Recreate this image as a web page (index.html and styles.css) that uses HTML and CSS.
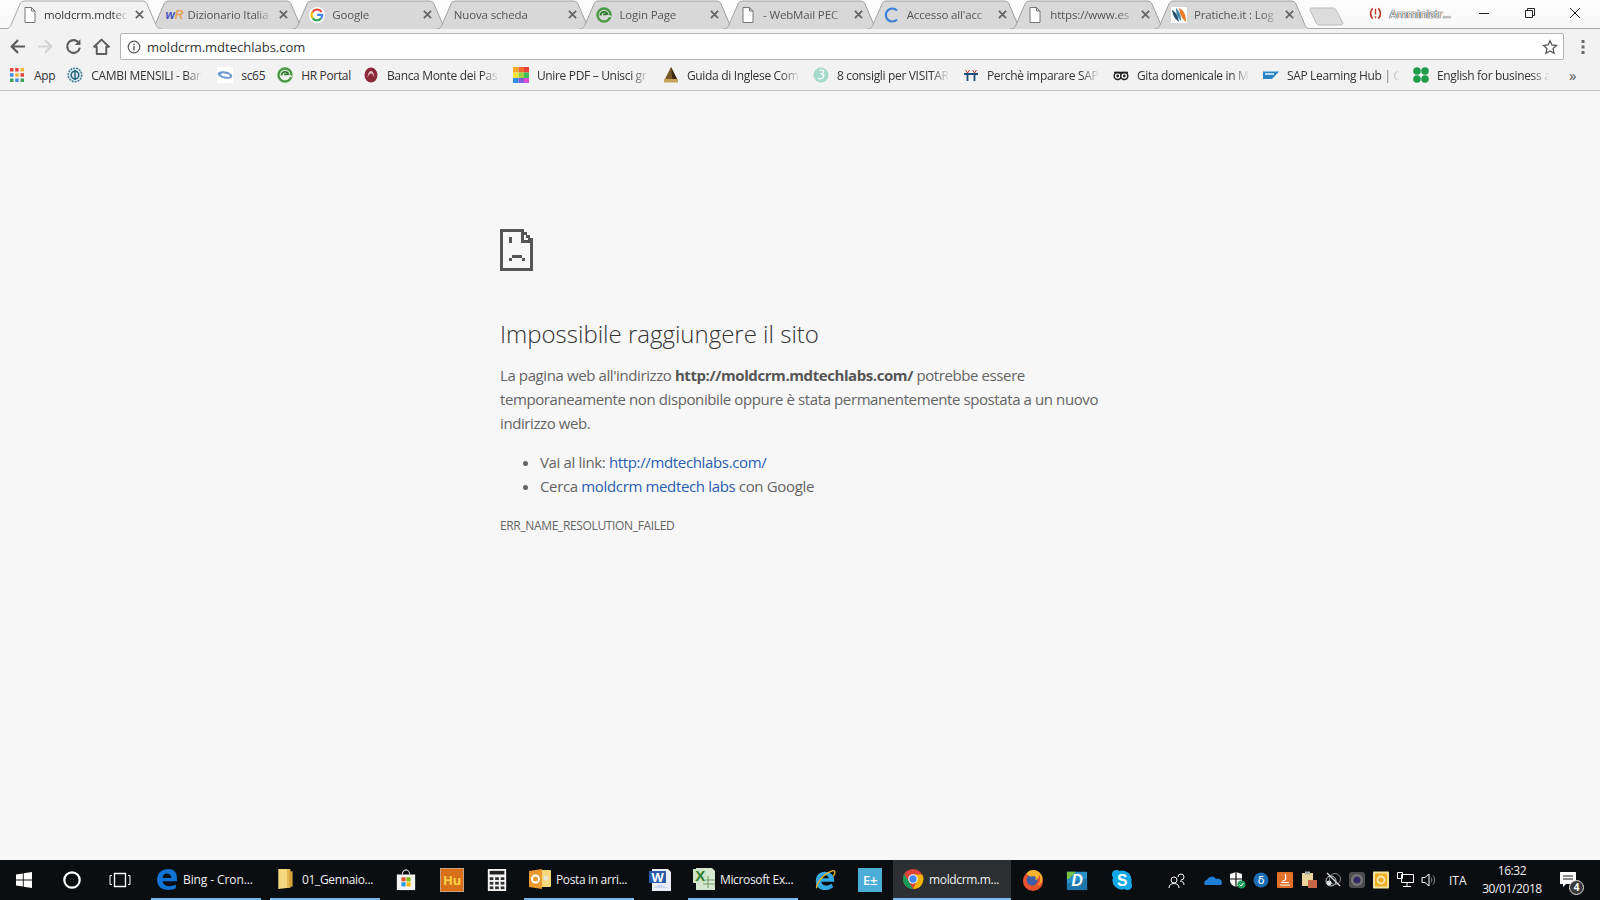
FILE: index.html
```html
<!DOCTYPE html>
<html lang="it">
<head>
<meta charset="utf-8">
<title>moldcrm.mdtechlabs.com</title>
<link rel="stylesheet" href="styles.css">
</head>
<body>
<svg class="defs" width="0" height="0" aria-hidden="true">
  <defs>
    <symbol id="doc" viewBox="0 0 16 16"><path d="M3 .5h6.500l3.500 3.500v11.500H3z M9.500 .5v3.500h3.500" fill="#fff" stroke="#777" stroke-width="1"/></symbol>
    <symbol id="spiral" viewBox="0 0 16 16"><circle cx="8" cy="8" r="6.500" fill="none" stroke="#4a9a45" stroke-width="2.400"/><path d="M4.500 8.500a3.600 3.600 0 0 1 7-1.200H7" fill="none" stroke="#2f7d2c" stroke-width="1.800"/><path d="M15 9.500l-4-1" stroke="#e6e6e6" stroke-width="1.800"/></symbol>
    <symbol id="tabshape" viewBox="0 0 157 29" preserveAspectRatio="none"><path d="M0 29C4 29 5 27 6 25L15 4C16 2 17 1 20 1H137C140 1 141 2 142 4L151 25C152 27 153 29 157 29"/></symbol>
    <symbol id="tabx" viewBox="0 0 10 10"><path d="M1 1l8 8M9 1L1 9" stroke="#666" stroke-width="2"/></symbol>
  </defs>
</svg>

<header class="chrome">
  <div class="tabstrip">
    <div class="tab active">
      <svg class="tab-bg"><use href="#tabshape"/></svg>
      <svg class="fav"><use href="#doc"/></svg>
      <span class="tab-title">moldcrm.mdtec</span><svg class="tab-x"><use href="#tabx"/></svg>
    </div>
    <div class="tab">
      <svg class="tab-bg"><use href="#tabshape"/></svg>
      <span class="fav fav-wr"><b class="w">w</b><b class="r">R</b></span>
      <span class="tab-title">Dizionario Italia</span><svg class="tab-x"><use href="#tabx"/></svg>
    </div>
    <div class="tab">
      <svg class="tab-bg"><use href="#tabshape"/></svg>
      <svg class="fav" viewBox="0 0 16 16"><circle cx="8" cy="8" r="8" fill="#fff"/><path d="M12.600 5A5.300 5.300 0 0 0 3.700 4.800" fill="none" stroke="#ea4335" stroke-width="2.200"/><path d="M3.700 4.800a5.300 5.300 0 0 0 0 6.400" fill="none" stroke="#fbbc05" stroke-width="2.200"/><path d="M3.700 11.200a5.300 5.300 0 0 0 8.300 .3" fill="none" stroke="#34a853" stroke-width="2.200"/><path d="M12 11.500A5.300 5.300 0 0 0 13.200 7.800H8.200" fill="none" stroke="#4285f4" stroke-width="2.200"/></svg>
      <span class="tab-title">Google</span><svg class="tab-x"><use href="#tabx"/></svg>
    </div>
    <div class="tab no-icon">
      <svg class="tab-bg"><use href="#tabshape"/></svg>
      <span class="tab-title">Nuova scheda</span><svg class="tab-x"><use href="#tabx"/></svg>
    </div>
    <div class="tab">
      <svg class="tab-bg"><use href="#tabshape"/></svg>
      <svg class="fav"><use href="#spiral"/></svg>
      <span class="tab-title">Login Page</span><svg class="tab-x"><use href="#tabx"/></svg>
    </div>
    <div class="tab">
      <svg class="tab-bg"><use href="#tabshape"/></svg>
      <svg class="fav"><use href="#doc"/></svg>
      <span class="tab-title">- WebMail PEC</span><svg class="tab-x"><use href="#tabx"/></svg>
    </div>
    <div class="tab">
      <svg class="tab-bg"><use href="#tabshape"/></svg>
      <svg class="fav" viewBox="0 0 16 16"><path d="M13 3.500A6.500 6.500 0 1 0 13 12.500" fill="none" stroke="#3d82d8" stroke-width="2.200"/></svg>
      <span class="tab-title">Accesso all'acc</span><svg class="tab-x"><use href="#tabx"/></svg>
    </div>
    <div class="tab">
      <svg class="tab-bg"><use href="#tabshape"/></svg>
      <svg class="fav"><use href="#doc"/></svg>
      <span class="tab-title">https://www.es</span><svg class="tab-x"><use href="#tabx"/></svg>
    </div>
    <div class="tab">
      <svg class="tab-bg"><use href="#tabshape"/></svg>
      <svg class="fav" viewBox="0 0 16 16"><rect width="16" height="16" fill="#fff"/><path d="M1 3c1 6 3 9 7 12C7 9 5 5 1 3z" fill="#24506e"/><path d="M5 1c0 5 1 9 5 13C10 9 9 5 5 1z" fill="#3f87a8"/><path d="M8 1c1 6 2 10 7 14 0-7-2-12-7-14z" fill="#ef7d2a"/></svg>
      <span class="tab-title">Pratiche.it : Log</span><svg class="tab-x"><use href="#tabx"/></svg>
    </div>
    <svg class="newtab" viewBox="0 0 35 19"><path d="M1 2C1 1 2 1 3 1H24C25 1 26 1 27 3L34 16C34 17 33 18 32 18H10C9 18 8 17.500 7.500 16.500L1 3z"/></svg>
    <div class="winbar">
      <svg class="admin-ico" viewBox="0 0 16 16"><path d="M5 2.500C2 5 2 11 5 13.500" fill="none" stroke="#c0392b" stroke-width="1.800"/><path d="M11 2.500C14 5 14 11 11 13.500" fill="none" stroke="#c0392b" stroke-width="1.800"/><path d="M8 3v6M8 11v2" stroke="#c0392b" stroke-width="1.500"/></svg>
      <span class="admin">Amministr...</span>
      <span class="wc"><svg viewBox="0 0 12 12"><path d="M1 6.500h10" stroke="#222" stroke-width="1"/></svg></span>
      <span class="wc"><svg viewBox="0 0 12 12"><path d="M1.500 3.500h7v7h-7z M3.500 3.500v-2h7v7h-2" fill="none" stroke="#222" stroke-width="1"/></svg></span>
      <span class="wc"><svg viewBox="0 0 12 12"><path d="M1 1l10 10M11 1L1 11" stroke="#222" stroke-width="1"/></svg></span>
    </div>
  </div>

  <div class="toolbar">
    <svg class="nav" viewBox="0 0 16 16"><path d="M15 8H2.500M8.500 2L2.500 8l6 6" fill="none" stroke="#5c5c5c" stroke-width="2"/></svg>
    <svg class="nav" viewBox="0 0 16 16"><path d="M1 8h12.500M7.500 2l6 6-6 6" fill="none" stroke="#d4d4d4" stroke-width="2"/></svg>
    <svg class="nav" viewBox="0 0 16 16"><path d="M13.300 5A6 6 0 1 0 14 9" fill="none" stroke="#5c5c5c" stroke-width="2"/><path d="M14.500 1.200v5.300H9.200z" fill="#5c5c5c"/></svg>
    <svg class="nav" viewBox="0 0 16 16"><path d="M8 1.500L1 8.200h2.500V15h9V8.200H15z" fill="none" stroke="#5c5c5c" stroke-width="1.800" stroke-linejoin="round"/></svg>
    <div class="omnibox">
      <svg class="info" viewBox="0 0 14 14"><circle cx="7" cy="7" r="5.800" fill="none" stroke="#555" stroke-width="1.200"/><path d="M7 6v4.500M7 3.500v1.400" stroke="#555" stroke-width="1.400"/></svg>
      <span class="url">moldcrm.mdtechlabs.com</span>
      <svg class="star" viewBox="0 0 16 16"><path d="M8 1.800l1.900 4.200 4.600.5-3.400 3.100.9 4.600L8 11.900l-4 2.300.9-4.600L1.500 6.500l4.600-.5z" fill="none" stroke="#555" stroke-width="1.300"/></svg>
    </div>
    <svg class="menu" viewBox="0 0 4 16"><rect x="0.500" y="1" width="3" height="3" fill="#6a6a6a"/><rect x="0.500" y="6.500" width="3" height="3" fill="#6a6a6a"/><rect x="0.500" y="12" width="3" height="3" fill="#6a6a6a"/></svg>
  </div>

  <nav class="bookmarks">
    <span class="bm bm-apps">
      <svg class="bm-ico" viewBox="0 0 16 16"><rect x="1" y="1" width="3.500" height="3.500" fill="#e0453a"/><rect x="6.200" y="1" width="3.500" height="3.500" fill="#e0453a"/><rect x="11.500" y="1" width="3.500" height="3.500" fill="#f2b632"/><rect x="1" y="6.200" width="3.500" height="3.500" fill="#4a8ae0"/><rect x="6.200" y="6.200" width="3.500" height="3.500" fill="#f2b632"/><rect x="11.500" y="6.200" width="3.500" height="3.500" fill="#e0453a"/><rect x="1" y="11.500" width="3.500" height="3.500" fill="#3da35a"/><rect x="6.200" y="11.500" width="3.500" height="3.500" fill="#4a8ae0"/><rect x="11.500" y="11.500" width="3.500" height="3.500" fill="#3da35a"/></svg>
      <span class="bm-short">App</span>
    </span>
    <span class="bm">
      <svg class="bm-ico" viewBox="0 0 16 16"><circle cx="8" cy="8" r="6.800" fill="#d9e6ec" stroke="#3e7f96" stroke-width="1.500" stroke-dasharray="2 1"/><circle cx="8" cy="8" r="3.800" fill="none" stroke="#1f5f7a" stroke-width="1.400"/><path d="M8 3v10" stroke="#1f5f7a" stroke-width="1.400"/></svg>
      <span class="bm-text">CAMBI MENSILI - Bar</span>
    </span>
    <span class="bm bm-auto">
      <svg class="bm-ico" viewBox="0 0 16 16"><rect width="16" height="16" fill="#fff"/><ellipse cx="8" cy="8" rx="7.500" ry="3.500" fill="#6f9ccc" transform="rotate(12 8 8)"/><ellipse cx="8.500" cy="8" rx="4.500" ry="1.500" fill="#fff" transform="rotate(12 8 8)"/></svg>
      <span class="bm-short">sc65</span>
    </span>
    <span class="bm bm-auto">
      <svg class="bm-ico"><use href="#spiral"/></svg>
      <span class="bm-short">HR Portal</span>
    </span>
    <span class="bm">
      <svg class="bm-ico" viewBox="0 0 16 16"><ellipse cx="8" cy="8" rx="6.500" ry="7.500" fill="#8a2a38"/><path d="M4.500 11C5 6 6.500 4 8 4s3 2 3.500 7c-1-3-2-4.500-3.500-4.500S5.500 8 4.500 11z" fill="#e6c3c8"/></svg>
      <span class="bm-text">Banca Monte dei Pas</span>
    </span>
    <span class="bm">
      <svg class="bm-ico" viewBox="0 0 16 16"><rect width="5.500" height="5.500" fill="#f5a623"/><rect x="5.500" width="5.500" height="5.500" fill="#f26a2e"/><rect x="11" width="5" height="5.500" fill="#e6413c"/><rect y="5.500" width="5.500" height="5.500" fill="#f7e43c"/><rect x="5.500" y="5.500" width="5.500" height="5.500" fill="#9fd53f"/><rect x="11" y="5.500" width="5" height="5.500" fill="#3fbf5b"/><rect y="11" width="5.500" height="5" fill="#2f8fe0"/><rect x="5.500" y="11" width="5.500" height="5" fill="#7a5fe0"/><rect x="11" y="11" width="5" height="5" fill="#d94fd2"/></svg>
      <span class="bm-text">Unire PDF – Unisci gr</span>
    </span>
    <span class="bm">
      <svg class="bm-ico" viewBox="0 0 16 16"><path d="M8 0L1 14h14z" fill="#7a5a2a"/><path d="M8 0l1.500 14H15z" fill="#3a2a12"/><path d="M1 12h14v3.500H1z" fill="#c8a35a"/></svg>
      <span class="bm-text">Guida di Inglese Com</span>
    </span>
    <span class="bm">
      <svg class="bm-ico" viewBox="0 0 16 16"><circle cx="8" cy="8" r="7.500" fill="#a5d9c9"/><path d="M6.500 3.500c3-1 5 0 4 2-.7 1-2 1.300-3 1.300 3 0 4 1 3 3s-4 2.500-5.500 1.500" fill="none" stroke="#fff" stroke-width="1.300"/></svg>
      <span class="bm-text">8 consigli per VISITAR</span>
    </span>
    <span class="bm">
      <svg class="bm-ico" viewBox="0 0 16 16"><path d="M1 7h14M4.500 7v7M11.500 7v7" stroke="#1e4e79" stroke-width="1.800" fill="none"/><path d="M2.500 3L4.500 6l2-3M9.500 3l2 3 2-3" stroke="#c0392b" stroke-width="1" fill="none"/></svg>
      <span class="bm-text">Perchè imparare SAP</span>
    </span>
    <span class="bm">
      <svg class="bm-ico" viewBox="0 0 16 16"><circle cx="4.700" cy="9" r="3.500" fill="#fff" stroke="#222" stroke-width="1.500"/><circle cx="11.300" cy="9" r="3.500" fill="#fff" stroke="#222" stroke-width="1.500"/><circle cx="4.700" cy="9" r="1.400" fill="#222"/><circle cx="11.300" cy="9" r="1.400" fill="#222"/><path d="M1 5.500h14" stroke="#222" stroke-width="1.600"/></svg>
      <span class="bm-text">Gita domenicale in M</span>
    </span>
    <span class="bm">
      <svg class="bm-ico" viewBox="0 0 16 16"><path d="M0 4.500h16L9 12H0z" fill="#2a85c7"/><path d="M2 7h9" stroke="#fff" stroke-width="1.400"/></svg>
      <span class="bm-text">SAP Learning Hub | C</span>
    </span>
    <span class="bm">
      <svg class="bm-ico" viewBox="0 0 16 16"><g fill="#1f9c4a"><circle cx="4" cy="4" r="3.800"/><circle cx="12" cy="4" r="3.800"/><circle cx="4" cy="12" r="3.800"/><circle cx="12" cy="12" r="3.800"/></g></svg>
      <span class="bm-text">English for business a</span>
    </span>
    <span class="bm-more">»</span>
  </nav>
</header>

<main class="page">
  <div class="error">
    <svg class="sad" viewBox="0 0 33 42" shape-rendering="crispEdges"><path fill="#555" fill-rule="evenodd" d="M0 0h24v3h3v3h3v3h3v33H0zM3 3v36h27V14H21V3zM24 6v5h4V9h-2V6zM9 8h3v6H9zM12 26h10v3H12zM9 29h3v3H9zM22 29h3v3h-3z"/></svg>
    <h1>Impossibile raggiungere il sito</h1>
    <p>La pagina web all'indirizzo <strong>http://moldcrm.mdtechlabs.com/</strong> potrebbe essere temporaneamente non disponibile oppure è stata permanentemente spostata a un nuovo indirizzo web.</p>
    <ul>
      <li>Vai al link: <a href="#">http://mdtechlabs.com/</a></li>
      <li>Cerca <a href="#">moldcrm medtech labs</a> con Google</li>
    </ul>
    <div class="code">ERR_NAME_RESOLUTION_FAILED</div>
  </div>
</main>

<footer class="taskbar">
  <span class="cell cell-48"><svg class="ti-start" viewBox="0 0 16 16"><path fill="#fff" d="M0 2.500L6.800 1.500V7.500H0zM7.700 1.300L16 0V7.500H7.700zM0 8.400H6.800V14.500L0 13.500zM7.700 8.400H16V16L7.700 14.700z"/></svg></span>
  <span class="cell cell-48"><svg class="ti" viewBox="0 0 20 20"><circle cx="10" cy="10" r="7" fill="none" stroke="#fff" stroke-width="2"/></svg></span>
  <span class="cell cell-48"><svg class="ti" viewBox="0 0 22 20"><path d="M5.500 3.500h11v13h-11z" fill="none" stroke="#fff" stroke-width="1.300"/><path d="M3 5.500H1v9h2M19 5.500h2v9h-2" fill="none" stroke="#fff" stroke-width="1"/></svg></span>
  <span class="app app-first"><svg class="ti" viewBox="0 0 20 20"><path fill="#1173d4" d="M1 11C1 5 5 1 11 1c5 0 8 3 8 8v3H6c.5 3 3 4.500 6 4.500 2 0 4-.5 6-1.500v3.500c-2 1-4 1.500-6.500 1.500C5 20 1 17 1 11zM6 9h8c0-2-1.500-4-4-4S6.500 6.500 6 9z"/></svg><span class="app-text">Bing - Cron...</span></span>
  <span class="app"><svg class="ti" viewBox="0 0 20 20"><path fill="#f5d77f" d="M3 1h9l1 2v15l-10 1z"/><path fill="#e5b84f" d="M11 1h3v17h-3z"/><path fill="#d4a23c" d="M13 3h3v14h-3z"/></svg><span class="app-text">01_Gennaio...</span></span>
  <span class="cell cell-48 cell-store"><svg class="ti" viewBox="0 0 22 24"><path d="M7 6a4 5 0 0 1 8 0" fill="none" stroke="#ddd" stroke-width="1.200"/><rect x="1" y="6" width="20" height="17" fill="#f4f4f4"/><rect x="6" y="9" width="4.500" height="4.500" fill="#e8502c"/><rect x="11.500" y="9" width="4.500" height="4.500" fill="#7fba00"/><rect x="6" y="14.500" width="4.500" height="4.500" fill="#1d9bea"/><rect x="11.500" y="14.500" width="4.500" height="4.500" fill="#fdb900"/></svg></span>
  <span class="cell cell-44"><span class="hu">Hu</span></span>
  <span class="cell cell-46"><svg class="ti" viewBox="0 0 20 24"><rect width="20" height="24" fill="#f4f4f4"/><rect x="2" y="2" width="16" height="4" fill="#222"/><g fill="#333"><rect x="2" y="9" width="4" height="3"/><rect x="8" y="9" width="4" height="3"/><rect x="14" y="9" width="4" height="3"/><rect x="2" y="14" width="4" height="3"/><rect x="8" y="14" width="4" height="3"/><rect x="14" y="14" width="4" height="3"/><rect x="2" y="19" width="4" height="3"/><rect x="8" y="19" width="4" height="3"/><rect x="14" y="19" width="4" height="3"/></g></svg></span>
  <span class="app app-outlook"><svg class="ti" viewBox="0 0 22 22"><rect x="8" y="2" width="14" height="17" rx="1" fill="#f7d77c"/><path d="M0 3l13-2v20L0 19z" fill="#ea9a2e"/><circle cx="6.500" cy="11" r="3.500" fill="none" stroke="#fff" stroke-width="2"/><circle cx="17" cy="10" r="2.500" fill="#e8e8d8"/></svg><span class="app-text">Posta in arri...</span></span>
  <span class="cell cell-52"><svg class="ti" viewBox="0 0 22 22"><path d="M3 0h16l3 3v19H3z" fill="#e9eef7"/><path d="M11 15l8 4H4z" fill="#c9d8ef"/><path d="M0 2h17v12H0z" fill="#2a5cab"/><text class="ti-letter" x="8.500" y="12.500">W</text></svg></span>
  <span class="app app-excel"><svg class="ti" viewBox="0 0 22 22"><path d="M3 0h16l3 3v19H3z" fill="#d7e8d2"/><path d="M10 12h12M10 16h12M15 8v12" stroke="#6f9c66" stroke-width="1"/><path d="M0 1h13v14H0z" fill="#cfe3c8"/><text class="ti-letter ti-green" x="7" y="13">X</text></svg><span class="app-text">Microsoft Ex...</span></span>
  <span class="cell cell-47 cell-ie"><svg class="ti" viewBox="0 0 24 24"><path fill="#35a8e6" d="M2 13C2 7 6 3 12 3c6 0 10 4 10 9v2H8c.5 3 2.500 4 5 4 2 0 4-.5 6-2l2 3.500C18 22 15 23 12 23 6 23 2 19 2 13zM8 10h8c0-2-2-3.500-4-3.500S8 8 8 10z"/><path d="M3 21C2 18 8 6 20 2c3-1 4 2 1 6" fill="none" stroke="#eeb421" stroke-width="1.500"/></svg></span>
  <span class="cell cell-44"><span class="etile">E±</span></span>
  <span class="app app-active"><svg class="ti" viewBox="0 0 24 24"><circle cx="12" cy="12" r="11" fill="#db4437"/><path d="M12 23A11 11 0 0 1 2.500 6.500L7.500 15z" fill="#0f9d58"/><path d="M12 23L17 13l-3-6h8.200A11 11 0 0 1 12 23z" fill="#f4b400"/><circle cx="12" cy="12" r="5.200" fill="#fff"/><circle cx="12" cy="12" r="4" fill="#4285f4"/></svg><span class="app-text">moldcrm.m...</span></span>
  <span class="cell cell-44"><svg class="ti" viewBox="0 0 24 24"><circle cx="12" cy="13" r="11" fill="#e8522c"/><circle cx="11" cy="12" r="6" fill="#3c5fa8"/><path d="M5 5c2 4 5 3 8 3 2 0 3 3 1 4 3 0 5-3 5-6 2 5 1 10-3 13 5-2 7-6 6-11-2-5-6-7-10-7C9 1 7 2 5 5z" fill="#f7b32c"/></svg></span>
  <span class="cell cell-44"><svg class="ti" viewBox="0 0 24 24"><rect x="1" y="3" width="22" height="20" fill="#2a91c9"/><path d="M1 3h10L3 11H1z" fill="#7ac142"/><path d="M1 16L23 10v13H1z" fill="#1d77ab"/><text class="ti-letter ti-it" x="12" y="19">D</text></svg></span>
  <span class="cell cell-45"><svg class="ti" viewBox="0 0 24 24"><circle cx="12" cy="12" r="10.500" fill="#13a9e8"/><circle cx="6" cy="6" r="5" fill="#13a9e8"/><circle cx="18" cy="18" r="5" fill="#13a9e8"/><text class="ti-letter ti-s" x="12" y="18">S</text></svg></span>
  <div class="tray">
    <svg class="tr" viewBox="0 0 18 18"><circle cx="7" cy="9" r="3" fill="none" stroke="#fff" stroke-width="1"/><path d="M2 17c0-3 2-4.500 5-4.500s5 1.500 5 4.500M11 6a3 3 0 1 1 3 3M13 10c2 0 4 1 4 4" fill="none" stroke="#fff" stroke-width="1"/></svg>
    <svg class="tr tr-gap" viewBox="0 0 18 18"><path d="M1 14a3 3 0 0 1 2-5 5 5 0 0 1 9-1 4 4 0 0 1 5 6z" fill="#1f7fd6"/></svg>
    <svg class="tr" viewBox="0 0 18 18"><path d="M8 1l6 2v6c0 4-3 6-6 7-3-1-6-3-6-7V3z" fill="#f4f4f4"/><path d="M8 1v15M2 8h12" stroke="#111" stroke-width="1.200"/><circle cx="13.500" cy="13.500" r="4" fill="#1e9c5a"/><path d="M11.500 13.500l1.500 1.500 2.500-3" fill="none" stroke="#fff" stroke-width="1"/></svg>
    <svg class="tr" viewBox="0 0 18 18"><circle cx="9" cy="9" r="7.500" fill="#1c6eb4"/><text class="tr-letter" x="9" y="13">δ</text></svg>
    <svg class="tr" viewBox="0 0 18 18"><rect x="1" y="1" width="16" height="16" rx="1" fill="#e2702a"/><path d="M4 14h10M5 11.500h8M6 10c3 0 5-1 3-7" stroke="#fff" stroke-width="1.200" fill="none"/></svg>
    <svg class="tr" viewBox="0 0 18 18"><rect x="2" y="2" width="11" height="13" fill="#e9d59c"/><rect x="5" y="0.500" width="5" height="3" fill="#aaa"/><rect x="8" y="9" width="9" height="8" fill="#c8664a"/></svg>
    <svg class="tr" viewBox="0 0 18 18"><circle cx="7" cy="10" r="5" fill="none" stroke="#ccc" stroke-width="1"/><circle cx="11" cy="8" r="5.500" fill="none" stroke="#888" stroke-width="1"/><path d="M3 2l13 13" stroke="#ddd" stroke-width="1.200"/><circle cx="5" cy="12" r="2.500" fill="#ddd"/></svg>
    <svg class="tr" viewBox="0 0 18 18"><rect x="1" y="1" width="16" height="16" rx="3" fill="#4d4d4d"/><circle cx="9" cy="9" r="6" fill="#777"/><circle cx="9" cy="9" r="3.500" fill="#2f2a63"/></svg>
    <svg class="tr" viewBox="0 0 18 18"><rect x="1" y="0.500" width="16" height="17" rx="1" fill="#f5e3a0"/><rect x="3" y="2.500" width="12" height="13" fill="#eeb023"/><circle cx="9" cy="9" r="3.500" fill="none" stroke="#f6e8b8" stroke-width="1.800"/></svg>
    <svg class="tr" viewBox="0 0 18 18"><path d="M5.500 3.500h12v8h-12zM1.500 1.500h5v6h-5zM11 11.500v4M7 15.500h8" fill="#0b0e11" stroke="#fff" stroke-width="1"/></svg>
    <svg class="tr" viewBox="0 0 18 18"><path d="M2 6.500h3L9 3v12l-4-3.500H2z" fill="none" stroke="#fff" stroke-width="1"/><path d="M11 6.500a4 4 0 0 1 0 5M13 4.500a7 7 0 0 1 0 9" fill="none" stroke="#888" stroke-width="1"/></svg>
    <span class="lang">ITA</span>
    <span class="clock"><span>16:32</span><span>30/01/2018</span></span>
    <span class="notif">
      <svg class="tr" viewBox="0 0 18 18"><path d="M1 1h16v12H7l-3 3v-3H1z" fill="#fff"/><path d="M4 5h10M4 8h10" stroke="#111" stroke-width="1"/></svg>
      <span class="badge">4</span>
    </span>
  </div>
</footer>
</body>
</html>
```

FILE: styles.css
```css
* { box-sizing: border-box; }
html, body { margin: 0; height: 100%; }
body {
  display: flex;
  flex-direction: column;
  height: 900px;
  overflow: hidden;
  background: #f7f7f7;
  font-family: "Open Sans", "Noto Sans", sans-serif;
}
.defs { position: absolute; }

/* Browser chrome */
.chrome { flex: none; background: #f2f2f2; }
.tabstrip {
  display: flex;
  align-items: flex-start;
  height: 29px;
  padding-left: 5px;
  background: linear-gradient(#fdfdfd, #f8f8f8);
  border-bottom: 1px solid #a8a8a8;
}
.tab {
  position: relative;
  flex: none;
  display: flex;
  align-items: center;
  width: 157px;
  height: 29px;
  margin-right: -13.4px;
  padding-left: 17px;
  font-size: 11.5px;
  letter-spacing: -0.15px;
  color: #555;
}
.tab.active { z-index: 2; color: #333; }
.tab.no-icon { padding-left: 18px; }
.tab-bg { position: absolute; inset: 0; width: 157px; height: 29px; fill: #d8d8d8; stroke: #a0a0a0; stroke-width: 1; }
.tab.active .tab-bg { fill: #f2f2f2; stroke: #a8a8a8; }
.fav { position: relative; flex: none; width: 16px; height: 16px; margin-right: 7px; }
.tab.active .fav, .fav-wr { margin-right: 6px; }
.tab-title {
  position: relative;
  flex: none;
  width: 85px;
  overflow: hidden;
  white-space: nowrap;
  -webkit-mask-image: linear-gradient(90deg, #000 80%, transparent 100%);
  mask-image: linear-gradient(90deg, #000 80%, transparent 100%);
}
.tab.no-icon .tab-title { width: 108px; }
.tab-x { position: relative; flex: none; width: 9px; height: 9px; margin-left: 6px; }
.fav-wr { display: inline-flex; align-items: center; font-size: 12px; font-family: "Liberation Sans", sans-serif; }
.fav-wr b { font-style: italic; }
.fav-wr .w { color: #4a50c0; }
.fav-wr .r { color: #e8a45a; }
.newtab { flex: none; width: 35px; height: 19px; margin: 7px 0 0 12px; fill: #dcdcdc; stroke: #bbb; }
.winbar { display: flex; align-items: center; flex: 1; height: 26px; padding-left: 24px; }
.admin-ico { width: 15px; height: 15px; margin-right: 6px; }
.admin { width: 72px; font-size: 11.5px; color: #fff; text-shadow: 0 0 1px #333, 0 0 1px #333, 0 0 1px #333; letter-spacing: -0.3px; }
.wc { display: flex; justify-content: center; width: 45.5px; }
.wc svg { width: 12px; height: 12px; }

.toolbar {
  display: flex;
  align-items: center;
  height: 33px;
  padding: 2px 0 0 9px;
  background: #f2f2f2;
}
.nav { flex: none; width: 17px; height: 17px; margin-right: 11px; }
.omnibox {
  flex: none;
  display: flex;
  align-items: center;
  width: 1444px;
  height: 27px;
  margin-left: -1px;
  padding: 0 5px 0 6px;
  background: #fff;
  border: 1px solid #b4b4b4;
  border-radius: 2px;
}
.info { flex: none; width: 14px; height: 14px; margin-right: 6px; }
.url { flex: 1; font-size: 13px; color: #333; }
.star { flex: none; width: 16px; height: 16px; }
.menu { flex: none; width: 4px; height: 16px; margin-left: 17px; }

.bookmarks {
  display: flex;
  align-items: center;
  height: 29px;
  padding: 0 0 2px 9px;
  background: #f2f2f2;
  border-bottom: 1px solid #bdbdbd;
  font-size: 12px;
  letter-spacing: -0.33px;
  color: #333;
}
.bm { flex: none; display: flex; align-items: center; width: 150px; padding-left: 1px; }
.bm-auto { width: auto; margin-right: 11px; padding-left: 1px; }
.bm-apps { width: auto; margin-right: 11px; padding-left: 0; }
.bm-ico { flex: none; width: 16px; height: 16px; margin-right: 8px; }
.bm-apps .bm-ico { margin-right: 9px; }
.bm-text {
  flex: none;
  width: 115px;
  overflow: hidden;
  white-space: nowrap;
  -webkit-mask-image: linear-gradient(90deg, #000 82%, transparent 98%);
  mask-image: linear-gradient(90deg, #000 82%, transparent 98%);
}
.bm-more { margin-left: 7px; font-size: 15px; color: #555; }

/* Error page */
.page { flex: 1; background: #f7f7f7; }
.error { width: 600px; margin: 0 auto; padding-top: 138px; color: #646464; font-size: 15px; line-height: 24px; letter-spacing: -0.35px; }
.sad { display: block; width: 33px; height: 42px; }
h1 { margin: 45px 0 0; font-size: 24px; font-weight: 300; line-height: 36px; color: #333; letter-spacing: 0; }
p { margin: 11px 0 0; letter-spacing: -0.4px; }
.error strong { color: #555; letter-spacing: -0.42px; }
ul { margin: 15px 0 0; padding-left: 40px; }
a { color: #2a5db0; text-decoration: none; }
.code { margin-top: 16px; font-size: 12px; letter-spacing: -0.35px; color: #646464; }

/* Taskbar */
.taskbar {
  flex: none;
  display: flex;
  align-items: center;
  height: 40px;
  background: #0b0e11;
  color: #f0f0f0;
  font-size: 12px;
  letter-spacing: -0.35px;
}
.cell { flex: none; display: flex; align-items: center; justify-content: center; height: 40px; }
.cell-48 { width: 48px; }
.cell-44 { width: 44px; }
.cell-45 { width: 45px; }
.cell-46 { width: 46px; }
.cell-47 { width: 47px; }
.cell-52 { width: 52px; }
.cell-store { margin-left: 2px; }
.cell-ie { margin-left: 3px; }
.ti { flex: none; width: 22px; height: 22px; }
.ti-start { width: 16px; height: 16px; }
.app {
  flex: none;
  display: flex;
  align-items: center;
  gap: 5px;
  width: 110px;
  height: 40px;
  margin-left: 9px;
  padding-left: 5px;
  border-bottom: 2px solid #76b9ed;
  white-space: nowrap;
}
.app-first { margin-left: 7px; letter-spacing: -0.1px; }
.app-outlook { margin-left: 4px; }
.app-excel { margin-left: 2px; }
.app-active { width: 118px; margin-left: 1px; padding-left: 9px; background: #2d3032; }
.hu { display: flex; align-items: center; justify-content: center; width: 24px; height: 24px; background: #d8701a; border: 1px solid #c9a083; color: #ffd24a; font-size: 13px; font-weight: 700; }
.etile { display: flex; align-items: center; justify-content: center; width: 24px; height: 24px; background: #4aaed6; color: #fff; font-size: 13px; font-weight: 600; }
.ti-letter { fill: #fff; font: 700 13px "Liberation Sans", sans-serif; text-anchor: middle; }
.ti-green { fill: #2f7d2f; font-size: 15px; }
.ti-it { font-style: italic; font-size: 17px; }
.ti-s { font-size: 17px; }
.tr-letter { fill: #fff; font: 400 11px "DejaVu Sans", sans-serif; text-anchor: middle; }
.tray { flex: 1; display: flex; align-items: center; justify-content: flex-end; padding-right: 23px; }
.tr { flex: none; width: 18px; height: 18px; margin-left: 6px; }
.tr-gap { margin-left: 19px; }
.lang { width: 30px; margin-left: 11px; font-size: 12px; letter-spacing: 0; }
.clock { display: flex; flex-direction: column; align-items: center; width: 64px; margin-left: 1px; font-size: 12px; line-height: 18px; letter-spacing: -0.4px; }
.notif { position: relative; display: flex; margin-left: 9px; }
.badge { position: absolute; right: -7px; bottom: -6px; width: 15px; height: 15px; border-radius: 50%; background: #3a3a3a; border: 1px solid #ddd; color: #fff; font-size: 10px; font-weight: 700; line-height: 13px; text-align: center; letter-spacing: 0; }
```
